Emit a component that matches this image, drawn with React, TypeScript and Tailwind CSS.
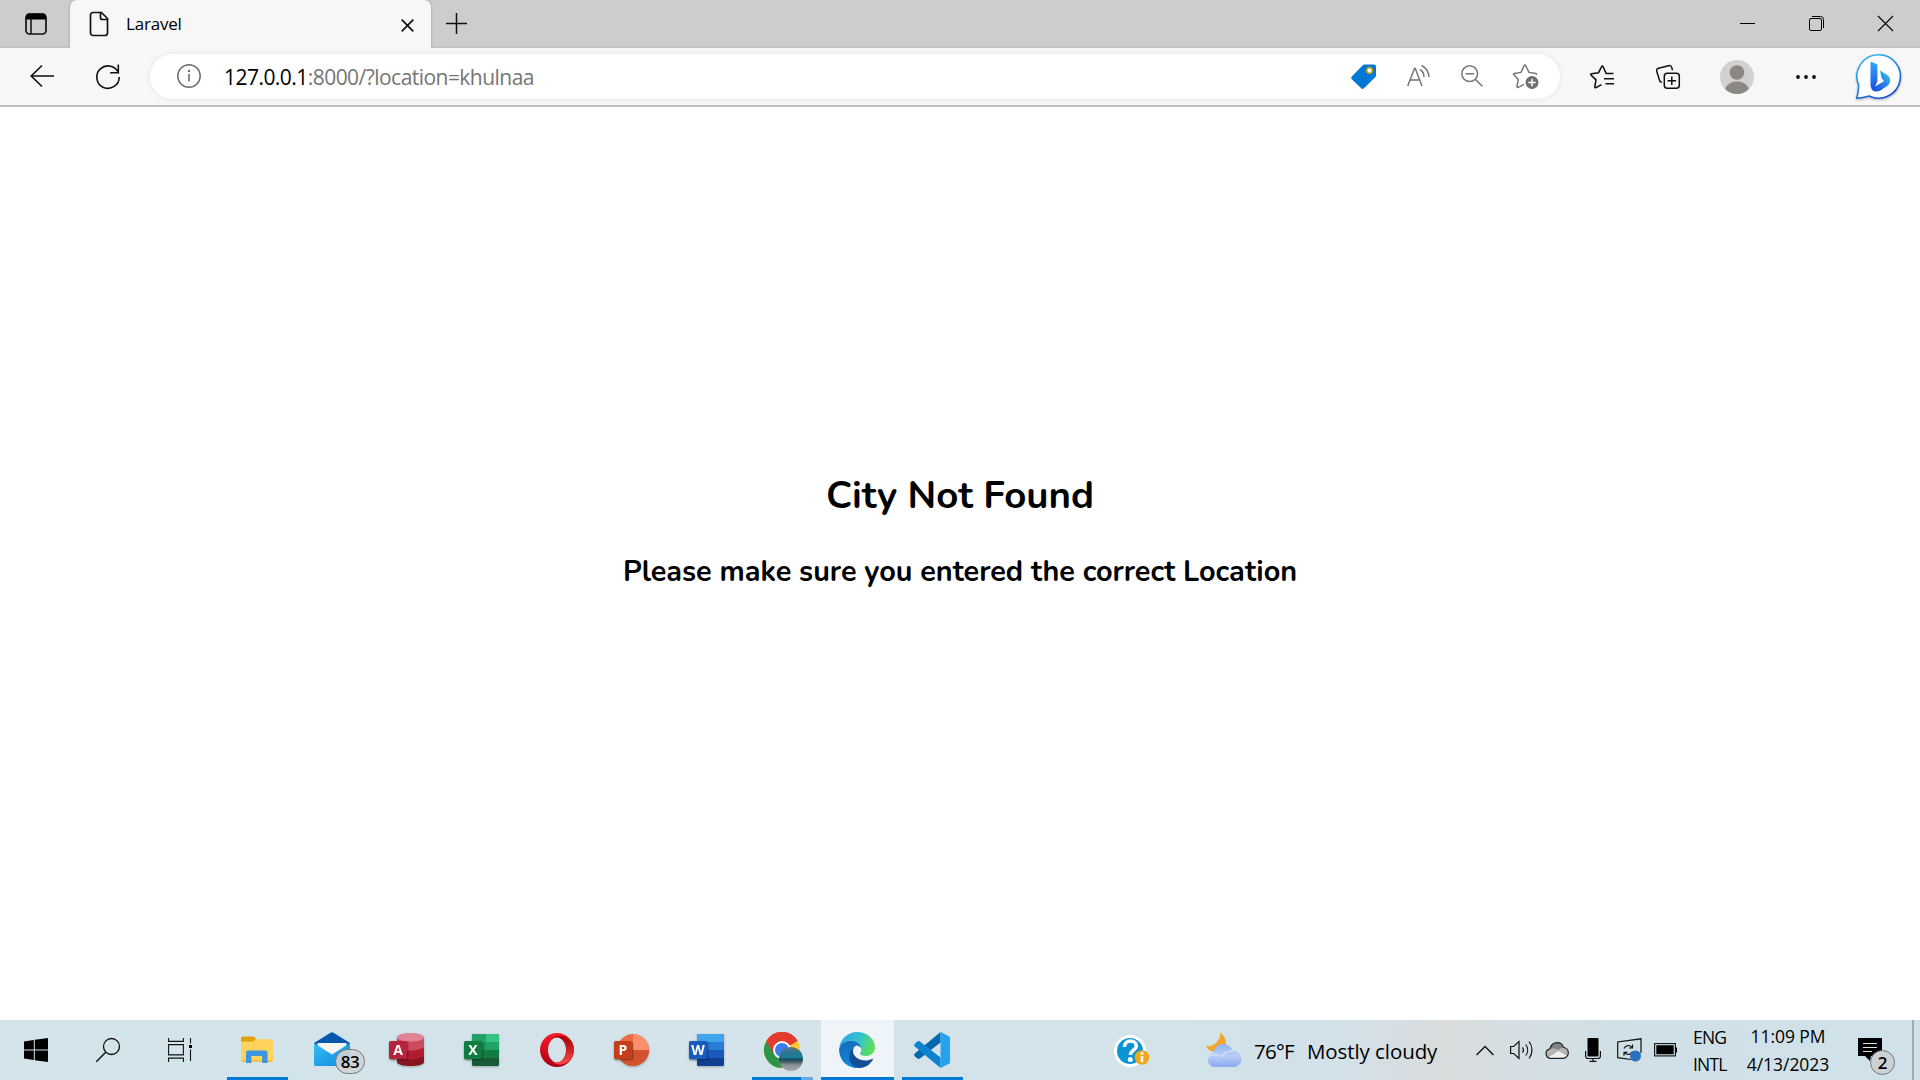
import type { ReactNode } from "react";

type IconProps = { className: string; box: string; children: ReactNode };

function Icon({ className, box, children }: IconProps) {
  return (
    <svg viewBox={box} fill="none" className={"block shrink-0 overflow-visible " + className}>
      {children}
    </svg>
  );
}

function TabStrip() {
  return (
    <header className="flex h-12 w-full items-end bg-[#cdcdcd] text-black shadow-[inset_0_-2px_2px_-1px_#bbb]">
      <div className="flex h-12 w-[70px] shrink-0 items-center pl-[25px]">
        <Icon className="h-[22px] w-[22px]" box="0 0 22 22">
          <rect x="1" y="1" width="20" height="20" rx="3.5" stroke="#111" strokeWidth="1.7" />
          <path d="M1 6.5V4a3.5 3.5 0 0 1 3.5-3.5h13A3.5 3.5 0 0 1 21 4v2.5z" fill="#000" />
          <path d="M6 6v15" stroke="#111" strokeWidth="1.5" />
        </Icon>
      </div>
      <div className="flex h-12 w-[361px] shrink-0 items-center rounded-t-[7px] bg-[#f7f7f7] pl-[19px] shadow-[0_0_3px_#999] [clip-path:inset(0_-4px_0_-4px)]">
        <Icon className="h-[26px] w-5" box="0 0 20 26">
          <path d="M4 1.5h8.5l6 6V22a2.5 2.5 0 0 1-2.5 2.5H4A2.5 2.5 0 0 1 1.5 22V4A2.5 2.5 0 0 1 4 1.5z" stroke="#111" strokeWidth="1.7" />
          <path d="M11.5 1.5V6.5a2 2 0 0 0 2 2h5" stroke="#111" strokeWidth="1.7" />
        </Icon>
        <span className="ml-[17px] w-[275px] font-['Open_Sans',sans-serif] text-[17px] leading-6 tracking-[-0.2px]">Laravel</span>
        <Icon className="mt-[2px] h-[13px] w-[13px]" box="0 0 13 13">
          <path d="M.7.7l11.6 11.6M12.3.7L.7 12.3" stroke="#111" strokeWidth="1.7" />
        </Icon>
      </div>
      <div className="flex h-12 grow items-center pb-px pl-[15px]">
        <Icon className="h-[21px] w-[21px]" box="0 0 21 21">
          <path d="M10.5 0v21M0 10.5h21" stroke="#111" strokeWidth="1.5" />
        </Icon>
        <div className="ml-auto flex items-center pr-[27px]">
          <Icon className="h-[15px] w-[15px]" box="0 0 15 15">
            <path d="M0 7.5h15" stroke="#000" />
          </Icon>
          <Icon className="ml-[54px] h-[15px] w-[15px]" box="0 0 15 15">
            <rect x=".5" y="2.5" width="12" height="12" rx="1.5" stroke="#000" />
            <path d="M3 .5h8.500a3 3 0 0 1 3 3V12" stroke="#000" />
          </Icon>
          <Icon className="ml-[54px] h-[15px] w-[15px]" box="0 0 15 15">
            <path d="M0 0l15 15M15 0L0 15" stroke="#000" strokeWidth="1.1" />
          </Icon>
        </div>
      </div>
    </header>
  );
}

function AddressBar() {
  return (
    <div className="flex h-[45px] w-[1410px] shrink-0 items-center rounded-full bg-white pl-[27px] shadow-[0_0_5px_#e3e3e3]">
      <Icon className="h-6 w-6" box="0 0 24 24">
        <circle cx="12" cy="12" r="11.2" stroke="#6e6e6e" strokeWidth="1.5" />
        <path d="M12 10v7.500" stroke="#6e6e6e" strokeWidth="1.6" />
        <circle cx="12" cy="7" r="1.2" fill="#6e6e6e" />
      </Icon>
      <span className="ml-[23px] mt-px w-[1127px] whitespace-nowrap font-['Open_Sans',sans-serif] text-[21px] leading-7 tracking-[-0.54px] text-[#757575]">
        <span className="text-black">127.0.0.1</span>:8000/?location=khulnaa
      </span>
      <Icon className="h-[25px] w-[25px]" box="0 0 25 25">
        <path d="M13.5 .5H23a2 2 0 0 1 2 2v9a2 2 0 0 1-.6 1.400L13 24.200a2 2 0 0 1-2.800 0L.8 15.200a2 2 0 0 1 0-2.800L12 1.100a2 2 0 0 1 1.500-.6z" fill="#0078d4" />
        <circle cx="18.5" cy="6.5" r="2.7" fill="#fff" stroke="#d9a514" strokeWidth="1.6" />
      </Icon>
      <Icon className="ml-[31px] h-[22px] w-[23px]" box="0 0 23 22">
        <path d="M.7 21L7.500 3.500h.8L15 21M3.200 15h9.500" stroke="#767676" strokeWidth="1.5" />
        <path d="M13 4.500c2.500 1.500 4 4.200 4 7.500M14.500.5c4.500 2.200 7 6.300 7.500 11.500" stroke="#767676" strokeWidth="1.5" />
      </Icon>
      <Icon className="ml-[31px] h-[22px] w-[22px]" box="0 0 22 22">
        <circle cx="8.7" cy="8.7" r="7.9" stroke="#767676" strokeWidth="1.5" />
        <path d="M4.500 8.700H13M14.500 14.500l6.800 6.700" stroke="#767676" strokeWidth="1.6" />
      </Icon>
      <Icon className="ml-[30px] h-[25px] w-[26px]" box="0 0 26 25">
        <path d="M11 20.300l-5.800 3c-.8.3-1.300 0-1.200-.9l1.200-7L.9 10.800c-.6-.6-.3-1.300.4-1.400l6.700-1L11.200 1.500c.3-.7 1.100-.7 1.400 0L16 8.400l6.700 1c.7.100 1 .8.500 1.300" stroke="#767676" strokeWidth="1.5" />
        <circle cx="19" cy="18.5" r="6.5" fill="#6f6f6f" />
        <path d="M19 14.800v7.400M15.300 18.500h7.400" stroke="#fff" strokeWidth="1.5" />
      </Icon>
    </div>
  );
}

function Toolbar() {
  return (
    <div className="flex h-[59px] w-full items-center border-b-2 border-[#bfbfbf] bg-[#f7f7f7] pb-[1px] pl-[30px]">
      <Icon className="h-[22px] w-6" box="0 0 24 22">
        <path d="M24 11H1M12 .5L1.200 11 12 21.500" stroke="#111" strokeWidth="1.6" />
      </Icon>
      <Icon className="ml-[42px] h-[26px] w-6" box="0 0 24 26">
        <path d="M22.600 10.500A11.200 11.200 0 1 0 23.200 14M22.300 1.500v8.300h-8.200" stroke="#111" strokeWidth="1.6" />
      </Icon>
      <div className="ml-[30px] flex">
        <AddressBar />
      </div>
      <Icon className="ml-[30px] mt-px h-6 w-6" box="0 0 24 24">
        <path d="M23.500 8.500h-7.300L13 1.500c-.3-.6-1-.6-1.300 0L8.500 7.700l-7 1c-.8.100-1 .8-.5 1.300l5 4.800-1.200 7c-.1.800.5 1.200 1.200.8l5.500-3M14 13.800h10M15.500 18.800H24" stroke="#111" strokeWidth="1.6" />
      </Icon>
      <Icon className="ml-[42px] mt-px h-6 w-6" box="0 0 24 24">
        <rect x="8.3" y="8.3" width="15" height="15" rx="3" stroke="#111" strokeWidth="1.5" />
        <path d="M15.800 11.500v8.600M11.500 15.800h8.600M5.800 17.500a3 3 0 0 1-2.300-2.200L.8 6.500A2.600 2.600 0 0 1 2.600 3.200L12.500.7c1.500-.4 2.900.4 3.300 1.900l.7 2.700" stroke="#111" strokeWidth="1.5" />
      </Icon>
      <Icon className="ml-10 mt-[2px] h-[34px] w-[34px]" box="0 0 34 34">
        <circle cx="17" cy="17" r="17" fill="#d2d1ce" />
        <circle cx="17" cy="12.5" r="7.3" fill="#8a8785" />
        <path d="M5 29c2-5 6.500-7.500 12-7.500S27 24 29 29a17 17 0 0 1-24 0z" fill="#8a8785" />
      </Icon>
      <Icon className="ml-[42px] mt-px h-1 w-5" box="0 0 20 4">
        <circle cx="2" cy="2" r="1.9" fill="#111" />
        <circle cx="10" cy="2" r="1.9" fill="#111" />
        <circle cx="18" cy="2" r="1.9" fill="#111" />
      </Icon>
      <Icon className="ml-10 h-[45px] w-[45px] drop-shadow-[0_1px_1px_#aaa]" box="0 0 45 45">
        <defs>
          <linearGradient id="bubble" x1="0" y1="0" x2=".6" y2="1">
            <stop offset="0" stopColor="#2ec9f0" />
            <stop offset="1" stopColor="#1c50d8" />
          </linearGradient>
          <linearGradient id="stem" x1="0" y1="0" x2="0" y2="1">
            <stop offset="0" stopColor="#37a6fb" />
            <stop offset="1" stopColor="#1d4fe0" />
          </linearGradient>
          <linearGradient id="bowl" x1="0" y1="1" x2="1" y2="0">
            <stop offset="0" stopColor="#1a46dc" />
            <stop offset=".6" stopColor="#2b8af0" />
            <stop offset="1" stopColor="#2fe0d8" />
          </linearGradient>
        </defs>
        <path d="M22.500.8a21.700 21.700 0 1 1-9.300 41.200c-3 .8-7.500 1.800-12.400 2.200C2 40 2.600 35.500 2.700 31.200A21.700 21.700 0 0 1 22.500.8z" fill="#fff" stroke="url(#bubble)" strokeWidth="1.6" />
        <path d="M14.500 7.500l5.500 2.200c1 .4 1.400 1 1.400 2v15.800L17.500 36c-2-1-3-2.700-3-5z" fill="url(#stem)" />
        <path d="M24 16.500l7 4.200c4.200 2.700 4.200 8.300.5 11l-7.500 5c-3 1.600-7.500.8-8.700-2l8.700-5.200 4-2.300-2.500-3.500z" fill="url(#bowl)" />
      </Icon>
    </div>
  );
}

function OfficeTile({ letter, tile, children }: { letter: string; tile: string; children: ReactNode }) {
  return (
    <div className="relative h-9 w-[35px] shrink-0 drop-shadow-[0_1px_1px_#9aa]">
      <Icon className="h-9 w-[35px]" box="0 0 35 36">
        {children}
      </Icon>
      <span
        className={
          "absolute left-0 top-[9px] flex h-[18px] w-[18px] items-center justify-center rounded-[1.5px] font-['Open_Sans',sans-serif] text-[14px] font-bold leading-none text-white shadow-[1px_1px_2px_#0006] " +
          tile
        }
      >
        {letter}
      </span>
    </div>
  );
}

function PinnedApps() {
  return (
    <div className="flex h-[60px] items-center">
      <Icon className="ml-6 h-6 w-6" box="0 0 24 24">
        <path d="M0 3.400l9.800-1.400v9.500H0zM10.800 1.800L24 0v11.500H10.800zM0 12.500h9.800V22L0 20.600zM10.800 12.500H24V24l-13.200-1.800z" fill="#000" />
      </Icon>
      <Icon className="ml-12 h-6 w-6" box="0 0 24 24">
        <circle cx="15.5" cy="8.5" r="8" stroke="#111" strokeWidth="1.3" />
        <path d="M9.700 14.300L.3 23.700" stroke="#111" strokeWidth="1.5" />
      </Icon>
      <Icon className="ml-12 h-6 w-6" box="0 0 24 24">
        <path d="M.6 0v3.400h14.800V0M.6 24v-3.900h14.800V24M.6 6.600h14.800v10.300H.6zM22.500 0v5.500M22.500 11.500V23" stroke="#111" strokeWidth="1.1" />
        <rect x="21" y="7" width="3" height="3" fill="#000" />
      </Icon>
      <div className="ml-[35px] flex h-[60px] w-[61px] items-center justify-center border-b-[3px] border-[#0078d7] pr-px pt-[3px]">
        <Icon className="h-7 w-8" box="0 0 32 28">
          <path d="M0 2A1.500 1.500 0 0 1 1.500.5h10.800c.6 0 1 .3 1.400.8L15 3v4H0z" fill="#dfa20c" />
          <path d="M0 5.500h12.300l2.400-2.300h15.800A1.500 1.500 0 0 1 32 4.700v19.600a1.500 1.500 0 0 1-1.500 1.500h-29A1.500 1.500 0 0 1 0 24.300z" fill="#fdd35d" />
          <path d="M0 24.600h32v.2a1.300 1.300 0 0 1-1.500 1H1.500a1.500 1.500 0 0 1-1.500-1.200z" fill="#f4b52a" />
          <path d="M5 27V16.500A2 2 0 0 1 7 14.500h17.500a2 2 0 0 1 2 2V27h-5.400v-7h-10.700v7z" fill="#3b96df" />
        </Icon>
      </div>
      <div className="relative ml-[26px] h-9 w-9">
        <Icon className="h-9 w-9" box="0 0 36 36">
          <defs>
            <linearGradient id="mail" x1="0" y1="0" x2="1" y2="1">
              <stop offset="0" stopColor="#33bdf4" />
              <stop offset="1" stopColor="#1287df" />
            </linearGradient>
          </defs>
          <path d="M0 11L16.500.7a3 3 0 0 1 3 0L36 11v9H0z" fill="#0758ad" />
          <path d="M3.500 11h29v12h-29z" fill="#f5f5f5" />
          <path d="M0 11l18 11.500L36 11v21.500a1.500 1.500 0 0 1-1.500 1.500h-33A1.500 1.500 0 0 1 0 32.500z" fill="url(#mail)" />
        </Icon>
        <span className="absolute left-[21px] top-[17px] flex h-[25px] w-[30px] items-center justify-center rounded-full border border-[#777] bg-[#d0d3d5e6] font-['Open_Sans',sans-serif] text-[17px] font-semibold leading-none tracking-[-0.4px] text-black">
          83
        </span>
      </div>
      <div className="ml-[39px] flex gap-10">
        <OfficeTile letter="A" tile="bg-[#b5243c]">
          <path d="M8 5v25c0 2.500 6 4 13.500 4S35 32.500 35 30V5z" fill="#881421" />
          <path d="M8 5v21c5 2 20 2.500 27-1.500V5z" fill="#b01e2f" />
          <path d="M8 5v12c6 2.500 20 2.500 27-1.500V5z" fill="#cb4b5f" />
          <ellipse cx="21.5" cy="5.3" rx="13.5" ry="4.3" fill="#e08395" />
        </OfficeTile>
        <OfficeTile letter="X" tile="bg-[#107c41]">
          <rect x="8" y="2" width="27" height="32" rx="1.5" fill="#185c37" />
          <path d="M8 18h27v8H8z" fill="#107c41" />
          <path d="M8 10h14v8H8z" fill="#21a366" />
          <path d="M8 3.500A1.500 1.500 0 0 1 9.500 2H22v8H8z" fill="#21a366" />
          <path d="M22 2h11.500A1.500 1.500 0 0 1 35 3.500V10H22z" fill="#33c481" />
          <path d="M22 10h13v8H22z" fill="#21a366" />
          <path d="M8 10h14v16H8z" fill="#15894b" opacity=".4" />
        </OfficeTile>
        <div className="flex w-[35px] items-center justify-center">
          <Icon className="h-9 w-9" box="0 0 36 36">
            <defs>
              <linearGradient id="operaOuter" x1="0" y1="0" x2="0" y2="1">
                <stop offset="0" stopColor="#ff1b2d" />
                <stop offset="1" stopColor="#a70014" />
              </linearGradient>
              <linearGradient id="operaInner" x1="0" y1="0" x2="0" y2="1">
                <stop offset="0" stopColor="#9c0000" />
                <stop offset="1" stopColor="#ff4b4b" />
              </linearGradient>
            </defs>
            <path fillRule="evenodd" d="M18 1a17 17 0 1 0 0 34 17 17 0 1 0 0-34zM18 5.500c5 0 9 5.600 9 12.500s-4 12.500-9 12.500S9 24.900 9 18 13 5.500 18 5.500z" fill="url(#operaOuter)" />
            <path d="M12 7.500C18 0 30 5 33.500 11c2 4.500 2 9.500 0 14C30 32 18 36 12 28.500c2 1.700 4 2.200 6 2.200 5 0 9.200-5.600 9.200-12.700S23 5.300 18 5.300c-2 0-4 .5-6 2.200z" fill="url(#operaInner)" />
          </Icon>
        </div>
        <OfficeTile letter="P" tile="bg-[#c43e1c]">
          <circle cx="19" cy="18" r="16" fill="#ed6c47" />
          <path d="M19 2a16 16 0 0 1 16 16H19z" fill="#ff8f6b" />
          <path d="M3 18h32a16 16 0 0 1-32 0z" fill="#d35230" />
        </OfficeTile>
        <OfficeTile letter="W" tile="bg-[#185abd]">
          <rect x="8" y="2" width="27" height="32" rx="1.5" fill="#103f91" />
          <path d="M8 18h27v8H8z" fill="#185abd" />
          <path d="M8 10h27v8H8z" fill="#2b7cd3" />
          <path d="M8 3.500A1.500 1.500 0 0 1 9.500 2h24A1.500 1.500 0 0 1 35 3.500V10H8z" fill="#41a5ee" />
        </OfficeTile>
      </div>
    </div>
  );
}

function RunningApps() {
  return (
    <div className="flex h-[60px] items-center">
      <div className="relative ml-7 flex h-[60px] w-[61px] flex-col justify-end">
        <div className="mb-[9px] ml-3 flex">
          <Icon className="h-9 w-9" box="0 0 36 36">
            <circle cx="18" cy="18" r="18" fill="#fcc934" />
            <path d="M18 18L2.400 9A18 18 0 0 1 33.600 9z" fill="#e33b2e" />
            <path d="M2.400 9A18 18 0 0 0 18 36l8-13.500L18 18z" fill="#2d9549" />
            <path d="M18 9h15.600A18 18 0 0 0 2.400 9l7.800 13.500z" fill="#e33b2e" />
            <circle cx="18" cy="18" r="9" fill="#fff" />
            <circle cx="18" cy="18" r="7" fill="#3a7cec" />
          </Icon>
        </div>
        <div className="absolute left-[27px] top-[27px] h-6 w-6 rounded-full bg-[linear-gradient(180deg,#5a7787_0%,#2a7590_25%,#1a8196_42%,#154b5c_52%,#47606a_62%,#8b9196_75%,#a5a8ac_100%)]" />
        <div className="flex h-[3px] w-full">
          <div className="w-[49px] bg-[#0078d7]" />
          <div className="w-3 bg-[#66abe4]" />
        </div>
      </div>
      <div className="ml-2 flex h-[60px] w-[73px] items-center justify-center border-b-[3px] border-[#0078d7] bg-[#eef4f7] pr-px pt-[3px]">
        <Icon className="h-9 w-9" box="0 0 36 36">
          <defs>
            <linearGradient id="edgeTop" x1="0" y1=".3" x2="1" y2=".6">
              <stop offset="0" stopColor="#2da4e6" />
              <stop offset=".5" stopColor="#35c2cf" />
              <stop offset="1" stopColor="#62e04e" />
            </linearGradient>
            <linearGradient id="edgeLeft" x1="0" y1="0" x2=".3" y2="1">
              <stop offset="0" stopColor="#1769b4" />
              <stop offset="1" stopColor="#0b87dc" />
            </linearGradient>
          </defs>
          <path d="M.3 16.200C1.200 7 8.700 0 18.200 0 28.500 0 36 7.500 36 15.300c0 5.700-4.500 8.700-9 8.700-4 0-6-1.200-6-2.300 0-1 1.300-1.500 1.300-4.200 0-4.500-4.800-7.800-9.800-7.800C6.700 9.700 1.500 12.500.3 16.200z" fill="url(#edgeTop)" />
          <path d="M.1 17C1.500 11.500 7 9 12 9c6 0 10 3.500 10.300 7.500-1.500-2.200-3-3-4.600-3-5 2-7.200 7-7.200 11 0 5.500 4 10 9.300 11.400-1.500.2-3.400.1-5-.2C6.500 34 0 27.500.1 17z" fill="url(#edgeLeft)" />
          <path d="M15.500 14.500c-3.500 2.500-5.500 6-5.500 10.200 0 5.800 4.600 10.600 10 11.200 6 .3 11-3.500 13.700-8 .4-.8-.2-1.300-1-.9-2 1-4.300 1.500-6.500 1.500-6.500 0-12.200-4.300-12.200-9.500 0-1.800.7-3.400 1.500-4.500z" fill="#134c97" />
        </Icon>
      </div>
      <div className="ml-2 flex h-[60px] w-[61px] items-center justify-center border-b-[3px] border-[#0078d7] pr-px pt-[3px]">
        <Icon className="h-9 w-9" box="0 0 36 36">
          <path d="M26.500 0v10.500L6 26.500c-1 .7-1.700.6-2.500 0L.800 24.200c-.8-.8-.8-2 0-2.700z" fill="#0068ae" />
          <path d="M26.500 36V25.500L6 9.500c-1-.7-1.700-.6-2.500 0L.8 11.800c-.8.8-.8 2 0 2.700z" fill="#0c83d0" />
          <path d="M26.500 0L35 4.200c.6.300 1 .9 1 1.600v24.400c0 .7-.4 1.300-1 1.600L26.500 36z" fill="#25a2f0" />
        </Icon>
      </div>
    </div>
  );
}

function Weather() {
  return (
    <div className="flex items-center">
      <Icon className="mt-[3px] h-9 w-9" box="0 0 36 36">
        <circle cx="16" cy="17" r="16" fill="#fff" />
        <circle cx="16" cy="17" r="13" fill="#0a94d6" />
        <path d="M10.500 13c0-3.800 2.500-6 6-6s5.800 2 5.800 5c0 4.200-5.800 4.200-5.800 9" stroke="#fff" strokeWidth="3.6" />
        <circle cx="16.3" cy="25.5" r="2.5" fill="#fff" />
        <circle cx="28" cy="23.5" r="7.3" fill="#f2a71b" />
        <path d="M28 22v6" stroke="#fff" strokeWidth="2.6" />
        <circle cx="28" cy="19.3" r="1.5" fill="#fff" />
      </Icon>
      <Icon className="ml-14 h-9 w-9" box="0 0 36 36">
        <defs>
          <linearGradient id="cloud" x1="0" y1="0" x2="0" y2="1">
            <stop offset="0" stopColor="#8fb2f2" />
            <stop offset=".5" stopColor="#b9cdf5" />
            <stop offset="1" stopColor="#8aaaf0" />
          </linearGradient>
        </defs>
        <path d="M14.500.5C18.800 4 21 9.500 19 15l-9 5c-4 0-8-1.500-10-6 7 1 14-4 14.500-13.500z" fill="#f2a72b" />
        <path d="M7.500 35a7.500 7.500 0 0 1-.2-14.500C8.500 15 12.500 12 17 12c4.700 0 8.300 2.800 9.500 7A8 8 0 0 1 28.500 35z" fill="url(#cloud)" />
        <path d="M2 25c3-3 8-3.500 11-1M16 25c2-5 6-6.500 11-6" stroke="#d4e1fb" strokeWidth="2" opacity=".7" />
      </Icon>
      <span className="ml-3 mt-[2px] w-[53px] whitespace-nowrap font-['Open_Sans',sans-serif] text-[20.5px] leading-7 tracking-[-0.7px]">76°F</span>
      <span className="mt-[2px] w-[169px] whitespace-nowrap font-['Open_Sans',sans-serif] text-[20.5px] leading-7 tracking-[-0.08px]">Mostly cloudy</span>
    </div>
  );
}

function Tray() {
  return (
    <div className="flex items-center font-['Open_Sans',sans-serif]">
      <Icon className="h-[11px] w-[18px]" box="0 0 18 11">
        <path d="M.5 10L9 1.500 17.500 10" stroke="#111" strokeWidth="1.4" />
      </Icon>
      <Icon className="ml-4 h-5 w-[23px]" box="0 0 23 20">
        <path d="M.6 6.500h3L9 1.500v17L3.600 13.500h-3z" stroke="#111" strokeWidth="1.2" />
        <path d="M12.500 7.300c1 1.500 1 3.900 0 5.400M15.800 4.500c2.400 3.200 2.400 7.800 0 11M19 1.500c4 5 4 12 0 17" stroke="#111" strokeWidth="1.2" />
      </Icon>
      <Icon className="ml-3 h-[17px] w-6" box="0 0 24 17">
        <path d="M5.500 16.300a4.800 4.800 0 0 1-.5-9.500C6 3 8.700.7 12 .7c3.200 0 5.600 1.800 6.500 4.800 2.800.2 4.800 2.500 4.800 5.200 0 3-2.300 5.600-5.300 5.600z" fill="#b5b5b5" />
        <path d="M5 6.800C6 3 8.700.7 12 .7c3.200 0 5.600 1.800 6.500 4.800-2 0-3.500 1-5 2.500-2.500-1.700-5-2-8.500-1.200z" fill="#818385" />
        <path d="M3 15.500L13.500 9l9 5c-1 1.500-2.600 2.300-4.500 2.300H5.500c-1 0-1.800-.3-2.500-.8z" fill="#efefef" />
        <path d="M5.500 16.300a4.800 4.800 0 0 1-.5-9.500C6 3 8.700.7 12 .7c3.200 0 5.600 1.800 6.500 4.800 2.800.2 4.800 2.500 4.800 5.200 0 3-2.300 5.600-5.300 5.600z" stroke="#222" strokeWidth="1.2" />
      </Icon>
      <Icon className="ml-4 h-6 w-4" box="0 0 16 24">
        <rect x="2.5" y="0" width="11" height="18.5" rx="1" fill="#000" />
        <path d="M.6 13v5c0 1.500 1 2.500 2.500 2.500h9.800c1.500 0 2.500-1 2.500-2.500v-5M8 20.500v3M4.500 23.400h7" stroke="#111" strokeWidth="1.2" />
      </Icon>
      <Icon className="ml-4 h-6 w-[25px]" box="0 0 25 24">
        <path d="M14 21.500L.7 19.700V4L24 .8V15" stroke="#111" strokeWidth="1.2" />
        <path d="M7 10.500C8.500 7 13 6.500 15 9.500M15.500 6.500v3.500H12M15.500 13.500c-1.500 3.500-6 4-8 1M7 17.800v-3.500h3.500" stroke="#111" strokeWidth="1.2" />
        <circle cx="18.5" cy="18" r="5.5" fill="#2a70bd" />
      </Icon>
      <Icon className="ml-3 h-[14px] w-[23px]" box="0 0 23 14">
        <rect x=".6" y=".6" width="20.8" height="12.3" stroke="#111" strokeWidth="1.1" />
        <path d="M2.300 2.300h17.400v9H2.300zM21.500 4.500H23v5h-1.500z" fill="#000" />
      </Icon>
      <div className="ml-4 mt-px flex w-[53px] flex-col text-[17.5px] leading-[27px] tracking-[-0.8px]">
        <span>ENG</span>
        <span>INTL</span>
      </div>
      <div className="flex w-[84px] flex-col items-center whitespace-nowrap text-[17.5px] leading-[28px] tracking-[-0.05px]">
        <span>11:09 PM</span>
        <span>4/13/2023</span>
      </div>
      <div className="relative ml-7 h-6 w-6">
        <Icon className="h-6 w-6" box="0 0 24 24">
          <path d="M0 0h24v18H13l-1 5-5-5H0z" fill="#000" />
          <path d="M5 5.500h14M5 9.500h14M5 13.500h9" stroke="#d6e3ea" strokeWidth="1.2" />
        </Icon>
        <span className="absolute left-3 top-3 flex h-[25px] w-[25px] items-center justify-center rounded-full border border-[#777] bg-[#cbd1d5] text-[17px] font-semibold leading-none text-black">
          2
        </span>
      </div>
      <div className="ml-[30px] mr-[6px] h-[60px] w-[2px] bg-[#9fabb3]" />
    </div>
  );
}

export default function App() {
  return (
    <div className="flex h-[1080px] w-[1920px] flex-col overflow-hidden bg-white text-black">
      <TabStrip />
      <Toolbar />
      <main className="flex grow flex-col items-center pt-[361px] font-['Nunito','Open_Sans',sans-serif] font-bold">
        <h1 className="text-[38.4px] leading-[56px]">City Not Found</h1>
        <h2 className="mt-[28px] text-[28.8px] leading-[40px]">Please make sure you entered the correct Location</h2>
      </main>
      <footer className="flex h-[60px] w-full shrink-0 items-center bg-[linear-gradient(90deg,#d3e4eb_0%,#d5e3ea_40%,#d2e3e9_60%,#d3e1e9_70%,#d8dcdd_75%,#d4dfe3_80%,#cfe0e8_86%,#d0e1e9_100%)]">
        <PinnedApps />
        <RunningApps />
        <div className="ml-auto flex items-center">
          <Weather />
          <Tray />
        </div>
      </footer>
    </div>
  );
}
